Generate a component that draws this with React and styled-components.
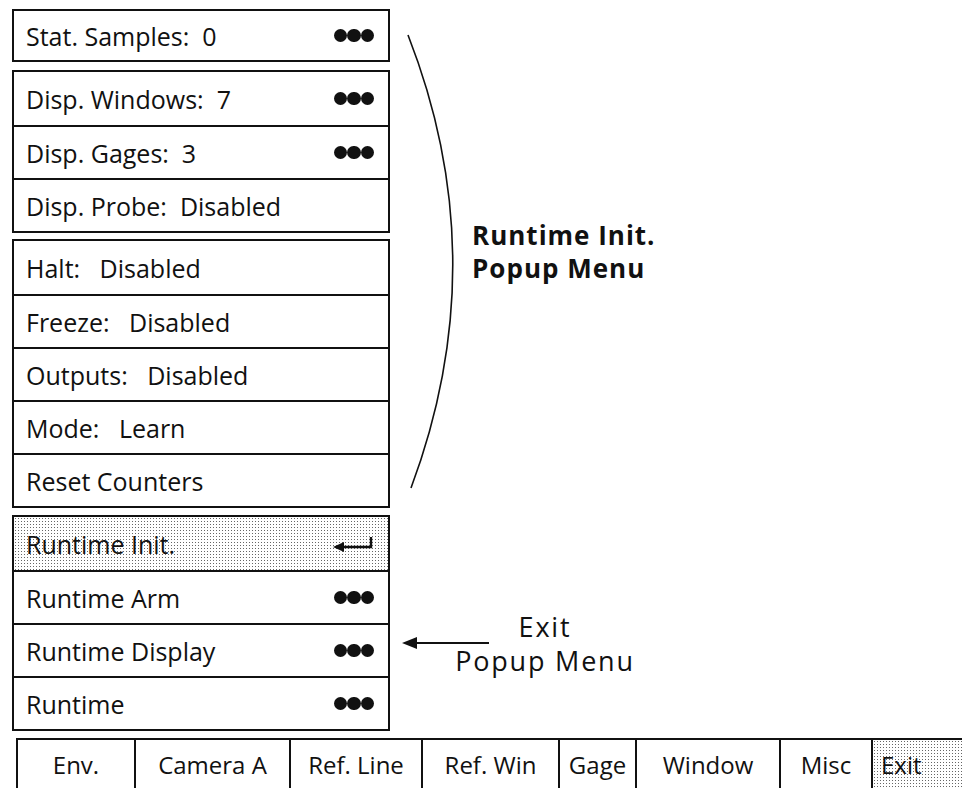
import React from 'react'
import styled, { createGlobalStyle } from 'styled-components'

const GlobalStyle = createGlobalStyle`
  html, body {
    margin: 0;
    padding: 0;
    background: #fff;
  }
  body {
    font-family: "Open Sans", "Noto Sans", "DejaVu Sans", sans-serif;
    color: #111;
  }
  *, *::before, *::after {
    box-sizing: border-box;
  }
`

const stipple = `
  background-color: #fff;
  background-image: radial-gradient(circle, #666 0.75px, transparent 1px);
  background-size: 3px 3px;
`

const Page = styled.div`
  width: 962px;
  height: 788px;
  overflow: hidden;
  display: flex;
  flex-direction: column;
`

const Top = styled.div`
  display: flex;
  height: 738px;
`

const MenuColumn = styled.div`
  width: 378px;
  margin: 9px 0 0 12px;
  display: flex;
  flex-direction: column;
`

const Group = styled.div`
  border: 2px solid #111;
  display: flex;
  flex-direction: column;
  margin-bottom: ${p => p.$gap || 7}px;
`

const Row = styled.div`
  height: ${p => (p.$compact ? 49 : 53)}px;
  display: flex;
  align-items: center;
  justify-content: space-between;
  padding: 0 14px 0 12px;
  font-size: 25px;
  white-space: pre;
  & + & {
    border-top: 2px solid #111;
  }
  ${p => p.$shaded && stipple}
`

const Dots = styled.span`
  display: flex;
  i {
    width: 13.5px;
    height: 13.5px;
    border-radius: 50%;
    background: #111;
  }
`

const AnnotationPane = styled.div`
  flex: 1;
  position: relative;
`

const Arc = styled.svg`
  position: absolute;
  left: 16px;
  top: 30px;
`

const BoldLabel = styled.div`
  position: absolute;
  left: 82px;
  top: 219px;
  font-size: 26px;
  font-weight: 700;
  letter-spacing: 1px;
  line-height: 33px;
`

const ExitLabel = styled.div`
  position: absolute;
  left: 50px;
  top: 610px;
  width: 210px;
  text-align: center;
  font-size: 27px;
  letter-spacing: 1.8px;
  line-height: 34px;
`

const Pointer = styled.svg`
  position: absolute;
  left: 11px;
  top: 636px;
`

const BottomBar = styled.div`
  display: flex;
  margin-left: 16px;
  height: 50px;
  border-top: 2px solid #111;
`

const Tab = styled.div`
  flex: ${p => (p.$w ? `0 0 ${p.$w}px` : '1')};
  display: flex;
  align-items: center;
  justify-content: ${p => (p.$left ? 'flex-start' : 'center')};
  padding-left: ${p => (p.$left ? '8px' : '0')};
  border-left: 2px solid #111;
  font-size: 24px;
  ${p => p.$shaded && stipple}
`

function MoreDots() {
  return (
    <Dots>
      <i />
      <i />
      <i />
    </Dots>
  )
}

function ReturnArrow() {
  return (
    <svg width="42" height="18" viewBox="0 0 42 18">
      <path d="M1 12 L12 7 L12 17 Z" fill="#111" />
      <path d="M10 12 H39 V2" fill="none" stroke="#111" strokeWidth="2.4" />
    </svg>
  )
}

const groups = [
  { gap: 8, rows: [{ label: 'Stat. Samples:  0', more: true, compact: true }] },
  {
    gap: 6,
    rows: [
      { label: 'Disp. Windows:  7', more: true },
      { label: 'Disp. Gages:  3', more: true },
      { label: 'Disp. Probe:  Disabled' },
    ],
  },
  {
    gap: 7,
    rows: [
      { label: 'Halt:   Disabled' },
      { label: 'Freeze:   Disabled' },
      { label: 'Outputs:   Disabled' },
      { label: 'Mode:   Learn' },
      { label: 'Reset Counters' },
    ],
  },
  {
    gap: 0,
    rows: [
      { label: 'Runtime Init.', ret: true, shaded: true },
      { label: 'Runtime Arm', more: true },
      { label: 'Runtime Display', more: true },
      { label: 'Runtime', more: true },
    ],
  },
]

const tabs = [
  { label: 'Env.', w: 118 },
  { label: 'Camera A', w: 155 },
  { label: 'Ref. Line', w: 132 },
  { label: 'Ref. Win', w: 137 },
  { label: 'Gage', w: 77 },
  { label: 'Window', w: 144 },
  { label: 'Misc', w: 92 },
  { label: 'Exit', shaded: true, left: true },
]

export default function App() {
  return (
    <Page>
      <GlobalStyle />
      <Top>
        <MenuColumn>
          {groups.map((g, gi) => (
            <Group key={gi} $gap={g.gap}>
              {g.rows.map(r => (
                <Row key={r.label} $compact={r.compact} $shaded={r.shaded}>
                  <span>{r.label}</span>
                  {r.more && <MoreDots />}
                  {r.ret && <ReturnArrow />}
                </Row>
              ))}
            </Group>
          ))}
        </MenuColumn>
        <AnnotationPane>
          <Arc width="60" height="470" viewBox="0 0 60 470">
            <path d="M2 5 Q90 230 5 458" fill="none" stroke="#111" strokeWidth="1.6" />
          </Arc>
          <BoldLabel>
            Runtime Init.
            <br />
            Popup Menu
          </BoldLabel>
          <Pointer width="90" height="14" viewBox="0 0 90 14">
            <path d="M1 7 L16 1 L16 13 Z" fill="#111" />
            <path d="M14 7 H88" stroke="#111" strokeWidth="2" />
          </Pointer>
          <ExitLabel>
            Exit
            <br />
            Popup Menu
          </ExitLabel>
        </AnnotationPane>
      </Top>
      <BottomBar>
        {tabs.map(t => (
          <Tab key={t.label} $w={t.w} $shaded={t.shaded} $left={t.left}>
            {t.label}
          </Tab>
        ))}
      </BottomBar>
    </Page>
  )
}
